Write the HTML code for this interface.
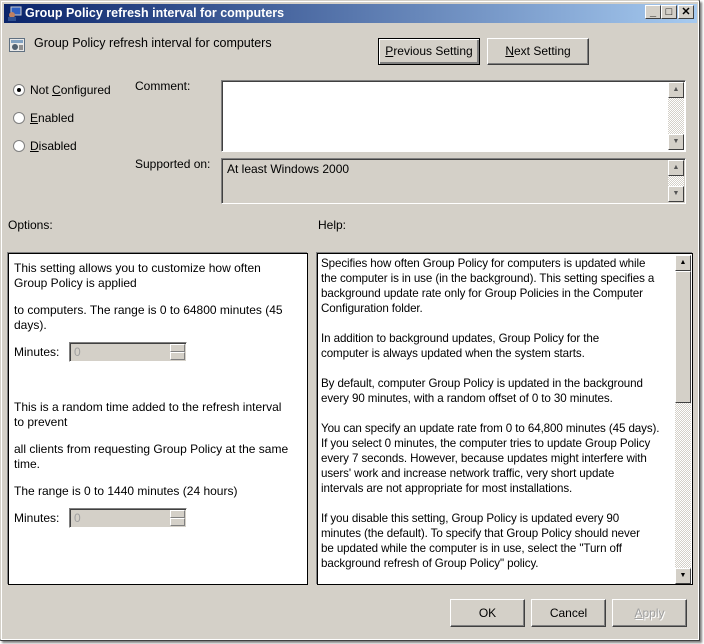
<!DOCTYPE html>
<html><head><style>
*{box-sizing:border-box;margin:0;padding:0}
body{width:704px;height:644px;background:#fff;font-family:"Liberation Sans",sans-serif;font-size:12px;color:#000;position:relative;overflow:hidden}
.win{position:absolute;left:0;top:0;width:700px;height:641px;background:#d4d0c8;border:1px solid #d4d0c8;border-right:2px solid #404040;border-bottom:2px solid #404040;box-shadow:2px 2px 2px rgba(0,0,0,.5);outline:1px solid #fff;outline-offset:-2px}
.title{position:absolute;left:3px;top:3px;width:693px;height:19px;background:linear-gradient(90deg,#0a246a,#a6caf0)}
.title span{position:absolute;left:21px;top:2px;color:#fff;font-weight:bold;font-size:12.5px}
.tb{position:absolute;top:5px;width:16px;height:14px;background:#d4d0c8;border:1px solid;border-color:#fff #404040 #404040 #fff;font-size:11px;font-weight:bold;text-align:center;line-height:12px}
.a{position:absolute;white-space:nowrap}
.btn{position:absolute;background:#d4d0c8;border:1px solid;border-color:#fff #404040 #404040 #fff;box-shadow:inset -1px -1px #808080;text-align:center;font-size:12px}
.sunk{position:absolute;border:1px solid;border-color:#808080 #fff #fff #808080;box-shadow:inset 1px 1px #404040}
.sb{position:absolute;width:16px;background:repeating-conic-gradient(#d4d0c8 0 25%,#fff 0 50%) 0 0/2px 2px}
.ar{position:absolute;left:0;width:16px;height:16px;background:#d4d0c8;border:1px solid;border-color:#fff #404040 #404040 #fff;font-size:7px;text-align:center;line-height:14px;color:#555}
.radio{position:absolute;width:12px;height:12px;border-radius:50%;background:#fff;border:1px solid #808080}
.radio.on:after{content:"";position:absolute;left:3px;top:3px;width:4px;height:4px;border-radius:50%;background:#000}
.box{position:absolute;background:#fff;border:1px solid #000;box-shadow:-1px -1px 0 #808080}
.box p{position:absolute;left:5px;line-height:15px;white-space:nowrap}
.help p{left:3px;font-size:11.6px;letter-spacing:-0.1px}
.spin{position:absolute;width:118px;height:20px;background:#d4d0c8;border:1px solid;border-color:#808080 #fff #fff #808080;box-shadow:inset 1px 1px #404040;color:#a0a0a0;padding:2px 4px}
.spin i{position:absolute;right:1px;width:15px;height:8px;background:#d4d0c8;border:1px solid;border-color:#fff #808080 #808080 #fff}
</style></head><body>
<div class="win">
<div class="title"><span>Group Policy refresh interval for computers</span>
<svg style="position:absolute;left:3px;top:2px" width="15" height="15"><rect x="4" y="1" width="10" height="8" fill="#3060c0" stroke="#ccc"/><circle cx="5" cy="9" r="3" fill="#c08060"/><rect x="1" y="11" width="8" height="4" fill="#305090"/></svg>
</div>
</div>
<div class="tb" style="left:645px">_</div>
<div class="tb" style="left:661px">□</div>
<div class="tb" style="left:678px">✕</div>
<svg class="a" style="left:9px;top:38px" width="16" height="14"><rect x="0.5" y="0.5" width="15" height="13" fill="#e8e8e8" stroke="#607080"/><rect x="2" y="2" width="12" height="3" fill="#80a0c0"/><circle cx="6" cy="9" r="3" fill="#506070"/><rect x="10" y="7" width="4" height="5" fill="#909090"/></svg>
<div class="a" style="left:34px;top:36px;font-size:12.5px">Group Policy refresh interval for computers</div>
<div class="btn" style="left:378px;top:38px;width:102px;height:27px;border:1px solid #000;box-shadow:inset 1px 1px #fff,inset -2px -2px #808080;line-height:24px"><u>P</u>revious Setting</div>
<div class="btn" style="left:487px;top:38px;width:102px;height:27px;line-height:24px"><u>N</u>ext Setting</div>
<div class="radio on" style="left:13px;top:84px"></div><div class="a" style="left:30px;top:83px">Not <u>C</u>onfigured</div>
<div class="radio" style="left:13px;top:112px"></div><div class="a" style="left:30px;top:111px"><u>E</u>nabled</div>
<div class="radio" style="left:13px;top:140px"></div><div class="a" style="left:30px;top:139px"><u>D</u>isabled</div>
<div class="a" style="left:135px;top:79px">Comment:</div>
<div class="a" style="left:135px;top:157px">Supported on:</div>
<div class="sunk" style="left:221px;top:80px;width:465px;height:72px;background:#fff"></div>
<div class="sb" style="left:668px;top:82px;height:68px"><div class="ar" style="top:0">▲</div><div class="ar" style="bottom:0">▼</div></div>
<div class="sunk" style="left:221px;top:158px;width:465px;height:46px;background:#d4d0c8"></div>
<div class="a" style="left:227px;top:162px">At least Windows 2000</div>
<div class="sb" style="left:668px;top:160px;height:42px"><div class="ar" style="top:0">▲</div><div class="ar" style="bottom:0">▼</div></div>
<div class="a" style="left:8px;top:218px">Options:</div>
<div class="a" style="left:318px;top:218px">Help:</div>
<div class="box" style="left:8px;top:253px;width:300px;height:332px">
<p style="top:7px">This setting allows you to customize how often<br>Group Policy is applied</p>
<p style="top:49px">to computers. The range is 0 to 64800 minutes (45<br>days).</p>
<p style="top:91px">Minutes:</p>
<div class="spin" style="left:60px;top:88px">0<i style="top:1px"></i><i style="top:9px"></i></div>
<p style="top:146px">This is a random time added to the refresh interval<br>to prevent</p>
<p style="top:188px">all clients from requesting Group Policy at the same<br>time.</p>
<p style="top:230px">The range is 0 to 1440 minutes (24 hours)</p>
<p style="top:257px">Minutes:</p>
<div class="spin" style="left:60px;top:254px">0<i style="top:1px"></i><i style="top:9px"></i></div>
</div>
<div class="box help" style="left:317px;top:253px;width:376px;height:332px">
<p style="top:2px">Specifies how often Group Policy for computers is updated while<br>the computer is in use (in the background). This setting specifies a<br>background update rate only for Group Policies in the Computer<br>Configuration folder.</p>
<p style="top:77px">In addition to background updates, Group Policy for the<br>computer is always updated when the system starts.</p>
<p style="top:122px">By default, computer Group Policy is updated in the background<br>every 90 minutes, with a random offset of 0 to 30 minutes.</p>
<p style="top:167px">You can specify an update rate from 0 to 64,800 minutes (45 days).<br>If you select 0 minutes, the computer tries to update Group Policy<br>every 7 seconds. However, because updates might interfere with<br>users' work and increase network traffic, very short update<br>intervals are not appropriate for most installations.</p>
<p style="top:257px">If you disable this setting, Group Policy is updated every 90<br>minutes (the default). To specify that Group Policy should never<br>be updated while the computer is in use, select the "Turn off<br>background refresh of Group Policy" policy.</p>
<div class="sb" style="left:357px;top:1px;height:329px"><div class="ar" style="top:0;color:#000">▲</div><div class="ar" style="top:16px;height:132px"></div><div class="ar" style="bottom:0;color:#000">▼</div></div>
</div>
<div class="btn" style="left:450px;top:599px;width:75px;height:28px;line-height:26px">OK</div>
<div class="btn" style="left:531px;top:599px;width:75px;height:28px;line-height:26px">Cancel</div>
<div class="btn" style="left:612px;top:599px;width:75px;height:28px;line-height:26px;color:#a0a0a0;text-shadow:1px 1px #fff"><u>A</u>pply</div>
</body></html>
